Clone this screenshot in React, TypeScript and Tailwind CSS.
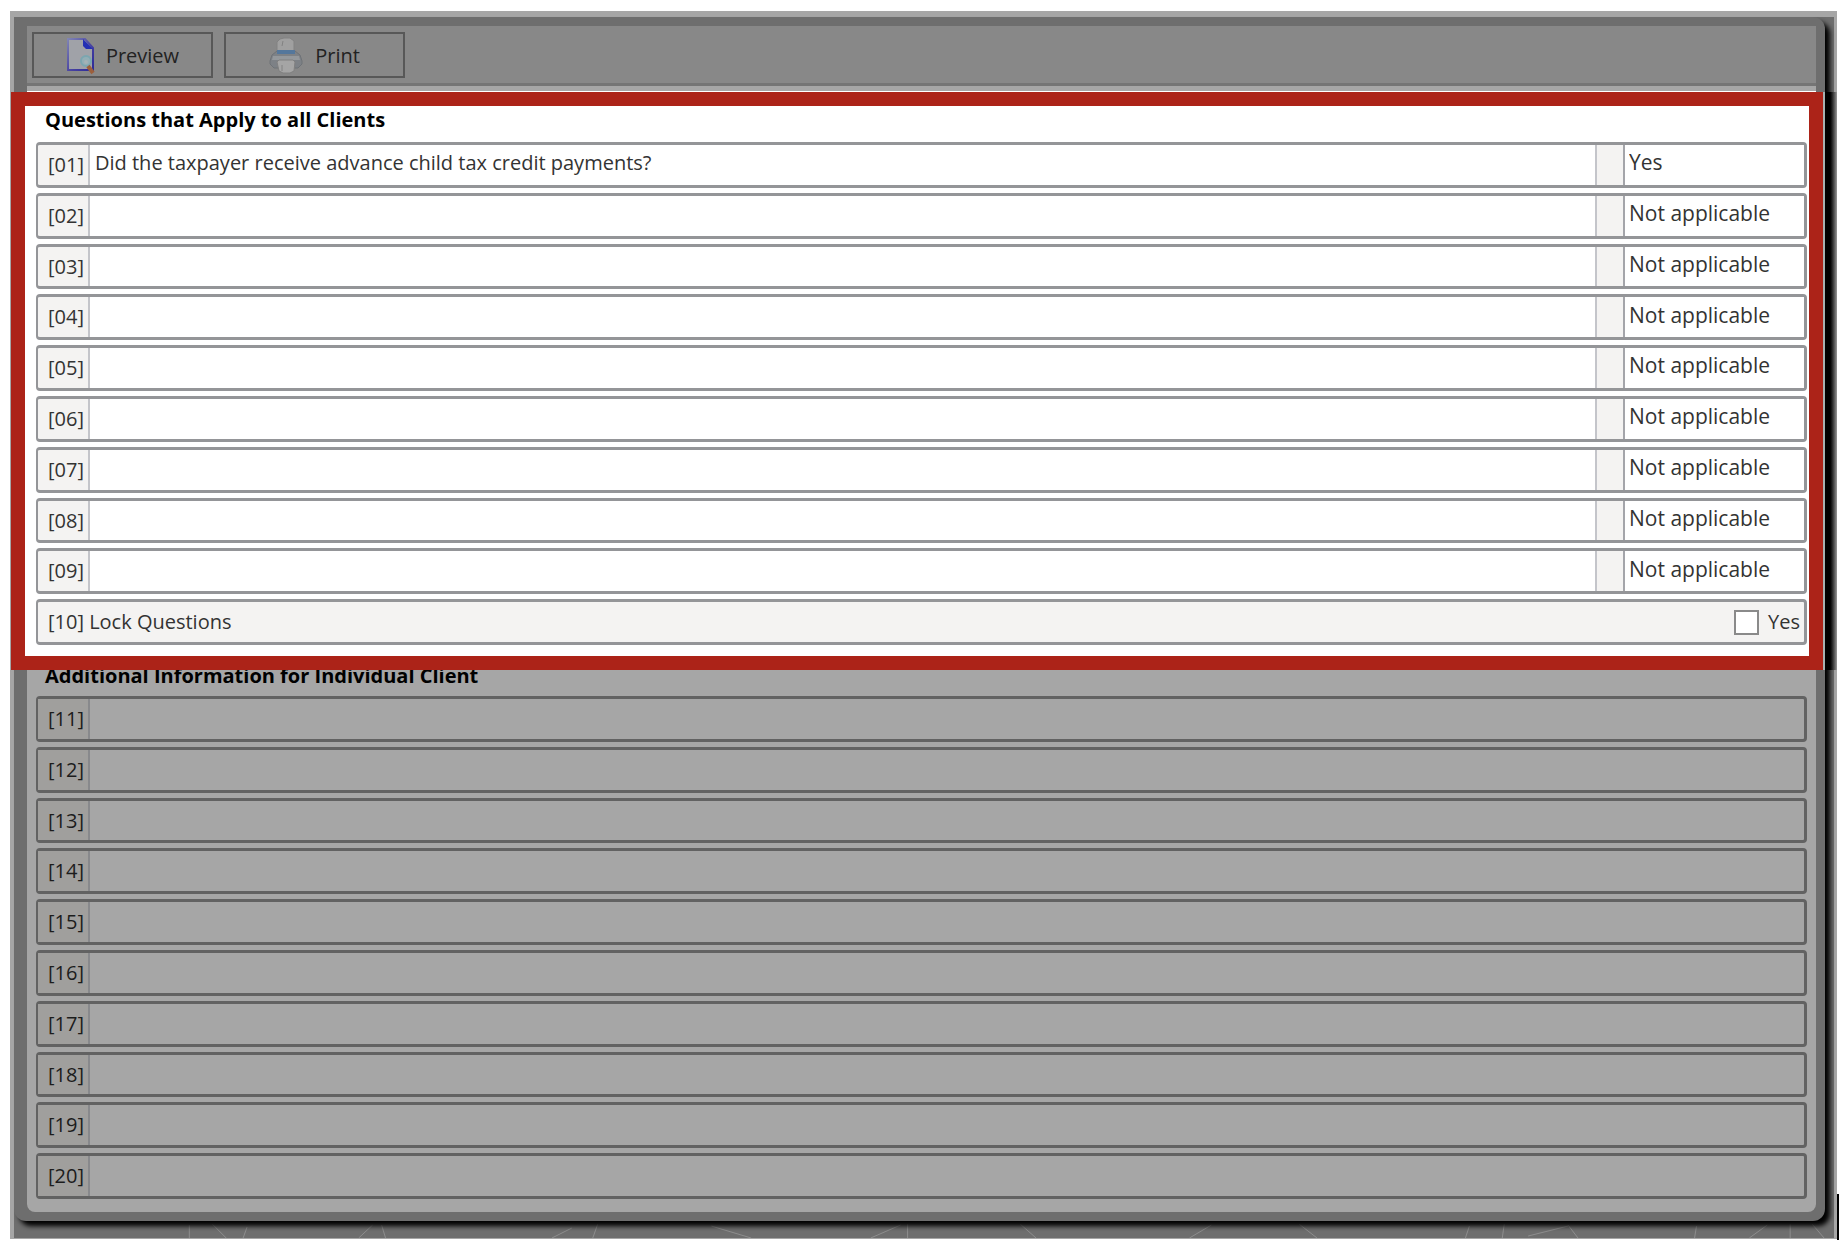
import { useState } from 'react';

const ANSWERS = ['Not applicable', 'Yes', 'No'];

const clientQuestions = [
  { id: '01', text: 'Did the taxpayer receive advance child tax credit payments?', answer: 'Yes' },
  { id: '02', text: '', answer: 'Not applicable' },
  { id: '03', text: '', answer: 'Not applicable' },
  { id: '04', text: '', answer: 'Not applicable' },
  { id: '05', text: '', answer: 'Not applicable' },
  { id: '06', text: '', answer: 'Not applicable' },
  { id: '07', text: '', answer: 'Not applicable' },
  { id: '08', text: '', answer: 'Not applicable' },
  { id: '09', text: '', answer: 'Not applicable' },
];

const individualIds = ['11', '12', '13', '14', '15', '16', '17', '18', '19', '20'];

function PreviewIcon() {
  return (
    <svg width="30" height="38" viewBox="0 0 30 38" aria-hidden="true">
      <defs>
        <linearGradient id="pageEdge" x1="0" y1="0" x2="1" y2="1">
          <stop offset="0" stopColor="#7f83b4" />
          <stop offset="0.6" stopColor="#453fa0" />
          <stop offset="1" stopColor="#2c2a98" />
        </linearGradient>
      </defs>
      <path d="M2 2h17l8 9v22H2z" fill="#a0a2a8" stroke="url(#pageEdge)" strokeWidth="2" />
      <path d="M17 2l10 10h-7l-3-3z" fill="#2530b4" />
      <circle cx="20" cy="24" r="5" fill="#93aeb5" stroke="#7ba6b0" strokeWidth="2" />
      <circle cx="20" cy="25" r="2" fill="#a5b2b6" />
      <path d="M22 29l5 7" stroke="#9c5f3c" strokeWidth="4" />
    </svg>
  );
}

function PrinterIcon() {
  return (
    <svg width="34" height="38" viewBox="0 0 34 38" aria-hidden="true">
      <path d="M8 14V5l3-3 4-1h6l4 3v10z" fill="#a0a0a0" stroke="#828282" />
      <path d="M1 24l2-6 5-4h18l5 4 2 6v3l-4 4H5l-4-4z" fill="#7d8186" stroke="#6e7277" />
      <path d="M8 13h18v4H8z" fill="#54779c" />
      <path d="M4 19h26l1 4H3z" fill="#94989c" />
      <path d="M8 25l2-2h14l2 2-1 9-4 2h-7l-4-2z" fill="#a5a5a5" stroke="#808080" />
      <path d="M13 28v6M14 4l-1 5" stroke="#828282" />
    </svg>
  );
}

// Faint web of lines on the desktop behind the window
function BackdropLines() {
  return (
    <svg
      className="absolute bottom-0 left-0 h-[14px] w-full"
      viewBox="0 0 1827 14"
      preserveAspectRatio="none"
      fill="none"
      stroke="#8e8e8e"
      aria-hidden="true"
    >
      <path d="M176 1v13M199 0l14 14M234 3l-4 11M346 14l14-13M369 1l4 13" />
      <path d="M540 14l20-10M586 0l-5 14M700 2l40 12M860 14l30-13M897 0v14M1010 0l16 14" />
      <path d="M1180 14l22-13M1290 0l18 14M1461 2l-4 12M1496 0l-2 14M1560 1l10 13M1520 12l40-10" />
      <path d="M1689 2l-2 12M1742 14l18-13M1783 0v14M1805 0l12 14" />
    </svg>
  );
}

function QuestionRow({ id, text, answer }: { id: string; text: string; answer: string }) {
  return (
    <div className="flex rounded-sm border-[3px] border-[#949598] border-l-2 bg-[#f4f3f2]">
      <label htmlFor={`q${id}`} className="w-[50px] shrink-0 pl-[10px] pt-1 leading-8">
        [{id}]
      </label>
      <input
        id={`q${id}`}
        defaultValue={text}
        className="min-w-0 flex-1 border-x-2 border-[#c4c5ca] bg-white px-[5px] pb-1 outline-none"
      />
      <div className="w-[26px] shrink-0" />
      <select
        aria-label={`Answer ${id}`}
        defaultValue={answer}
        className="w-[181px] shrink-0 appearance-none border-l-2 border-[#a4a5aa] bg-white pl-1 pb-1 text-[21px] outline-none"
      >
        {ANSWERS.map((a) => (
          <option key={a}>{a}</option>
        ))}
      </select>
    </div>
  );
}

export default function App() {
  const [locked, setLocked] = useState(false);

  return (
    <div className="bg-white pt-[11px] pr-[9px] pb-[11px] pl-[10px] font-['Open_Sans','Noto_Sans',sans-serif] text-[20px] text-[#333]">
      <div className="relative bg-[#a6a6a6] pt-[6px] pr-[3px] pb-px pl-1">
        <div className="relative bg-[#6e6e6e] pr-[9px] pb-[17px]">
          <BackdropLines />
          <div className="relative rounded-xl bg-[#6e6e6e] pb-[9px] shadow-[5px_5px_5px_0px_#000]">
            {/* Toolbar */}
            <div className="ml-[13px] mr-[9px] pt-[9px]">
              <div className="flex h-[57px] gap-[11px] bg-[#888] pl-[5px] pt-[6px]">
                <button className="flex h-[46px] w-[181px] items-center justify-center gap-[10px] border-2 border-[#585858] pt-px text-[#222]">
                  <PreviewIcon />
                  Preview
                </button>
                <button className="flex h-[46px] w-[181px] items-center justify-center gap-3 border-2 border-[#585858] pt-px text-[#222]">
                  <PrinterIcon />
                  Print
                </button>
              </div>
              <div className="h-[9px] border-t-[3px] border-b border-t-[#757575] border-b-white bg-[#a6a6a6]" />
            </div>

            {/* Questions for all clients */}
            <section className="relative z-10 -ml-[3px] mr-[2px] border-[14px] border-[#ac2318] bg-white pr-[2px] pb-[11px] pl-[11px]">
              <h2 className="h-9 pl-[9px] font-bold leading-7 text-black">
                Questions that Apply to all Clients
              </h2>
              <div className="grid min-h-[503px] auto-rows-fr gap-[5px]">
                {clientQuestions.map((q) => (
                  <QuestionRow key={q.id} {...q} />
                ))}
                <div className="flex items-center rounded-sm border-[3px] border-[#949598] border-l-2 bg-[#f4f3f2] pl-[10px] pr-1">
                  <span className="flex-1">[10] Lock Questions</span>
                  <label className="flex items-center gap-[9px]">
                    <input
                      type="checkbox"
                      checked={locked}
                      onChange={(e) => setLocked(e.target.checked)}
                      className="h-[25px] w-[25px] appearance-none border-2 border-[#8a8a8a] bg-white checked:bg-[#8a8a8a]"
                    />
                    Yes
                  </label>
                </div>
              </div>
              {/* Window edge and shadow without the dimming */}
              <div className="absolute -top-[14px] -bottom-[14px] left-[calc(100%+14px)] w-[14px] bg-linear-to-r from-black from-35% to-[#999] border-l-2 border-[#a8b0b0]" />
            </section>

            {/* Individual client information */}
            <section className="ml-[13px] mr-[9px] rounded-b-lg bg-[#a6a6a6] pr-[9px] pb-[13px] pl-[9px] text-[#1c1c1c]">
              <h2 className="-mt-2 h-[34px] pl-[9px] font-bold leading-7 text-black">
                Additional Information for Individual Client
              </h2>
              <div className="grid min-h-[503px] auto-rows-fr gap-[5px]">
                {individualIds.map((id) => (
                  <div key={id} className="flex rounded-sm border-[3px] border-[#626262] border-l-2">
                    <label htmlFor={`q${id}`} className="w-[50px] shrink-0 bg-[#a09f9d] pl-[10px] pt-1 leading-8">
                      [{id}]
                    </label>
                    <input id={`q${id}`} className="min-w-0 flex-1 border-l-2 border-[#88898c] px-[5px] outline-none" />
                  </div>
                ))}
              </div>
            </section>
          </div>
        </div>
        <div className="absolute -right-[2px] -bottom-px h-[46px] w-[2px] bg-black" />
      </div>
    </div>
  );
}
